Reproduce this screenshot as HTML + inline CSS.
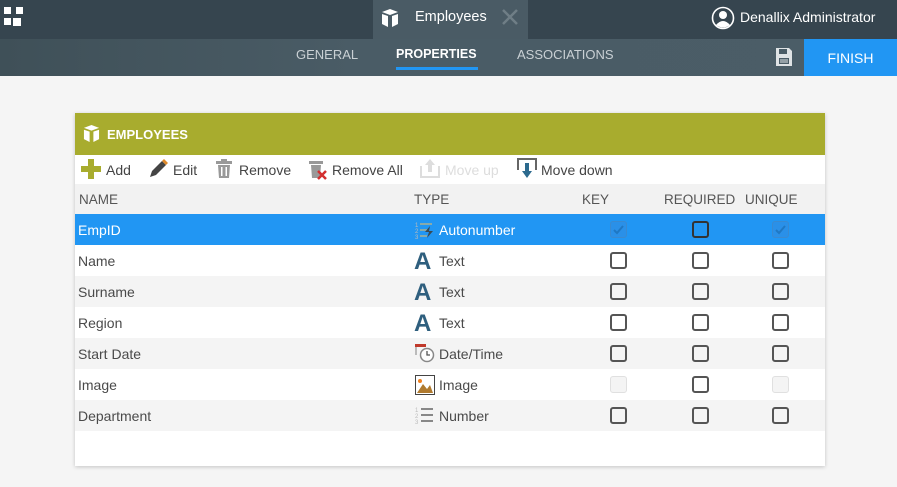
<!DOCTYPE html>
<html><head><meta charset="utf-8"><style>
*{margin:0;padding:0;box-sizing:border-box}
body{width:897px;height:487px;overflow:hidden;background:#f5f5f5;font-family:"Liberation Sans",sans-serif;font-size:14px;color:#4a4a4a;position:relative}
.a{position:absolute}
.top{left:0;top:0;width:897px;height:39px;background:#36454f}
.tab{left:373px;top:0;width:155px;height:39px;background:#4a5b65}
.bar{left:0;top:39px;width:897px;height:37px;background:linear-gradient(90deg,#3f5058,#4a5c66 40%,#4b5d67)}
.nav{top:47px;font-size:13px;color:#c9d0d4}
.fin{left:804px;top:39px;width:93px;height:37px;background:#2196f3;color:#fff;font-size:14px;text-align:center;line-height:38px}
.panel{left:75px;top:113px;width:750px;height:353px;background:#fff;box-shadow:0 1px 4px rgba(0,0,0,.2)}
.hd{left:0;top:0;width:750px;height:42px;background:#a8ac2e;color:#fff;font-weight:bold;font-size:13px}
.tb{top:49px;font-size:14px;color:#444}
.row{left:0;width:750px;height:31px}
.row span{position:absolute;top:8px}
.cb{position:absolute;width:17px;height:17px;border:2px solid #555;border-radius:3px;top:7px}
.cd{border:1px solid #e0e0e0;background:#f4f4f4}
</style></head><body>
<div class="a top"></div>
<div class="a" style="left:4px;top:7px;width:7px;height:7px;background:#fff"></div>
<div class="a" style="left:16px;top:7px;width:7px;height:7px;background:#fff"></div>
<div class="a" style="left:4px;top:18px;width:7px;height:7px;background:#fff"></div>
<div class="a" style="left:13px;top:18px;width:8px;height:8px;background:#fff"></div>
<div class="a tab"></div>
<svg class="a" style="left:381px;top:9px" width="18" height="18" viewBox="0 0 18 18"><path d="M1 3 L9 0 L17 3 L9 6Z M1 5 L7 7 V18 L1 15Z M17 5 L11 7 V18 L17 15Z" fill="#fff"/></svg>
<div class="a" style="left:415px;top:9px;color:#fff;font-size:14.5px">Employees</div>
<svg class="a" style="left:501px;top:8px" width="18" height="18"><path d="M2 2L16 16M16 2L2 16" stroke="#6f7e86" stroke-width="2.5"/></svg>
<svg class="a" style="left:711px;top:6px" width="24" height="24" viewBox="0 0 24 24"><circle cx="12" cy="12" r="10.5" fill="none" stroke="#fff" stroke-width="1.6"/><circle cx="12" cy="9" r="4" fill="#fff"/><path d="M5 19 Q12 11 19 19 Q12 24 5 19Z" fill="#fff"/></svg>
<div class="a" style="left:740px;top:9px;color:#fff;font-size:14px">Denallix Administrator</div>
<div class="a bar"></div>
<div class="a nav" style="left:296px">GENERAL</div>
<div class="a nav" style="left:396px;color:#fff;font-weight:bold;font-size:12.5px">PROPERTIES</div>
<div class="a" style="left:396px;top:67px;width:82px;height:3px;background:#2196f3"></div>
<div class="a nav" style="left:517px">ASSOCIATIONS</div>
<svg class="a" style="left:775px;top:47px" width="18" height="20" viewBox="0 0 18 20"><path d="M1 1H14L17 4V19H1Z" fill="#dfe3e5"/><rect x="4" y="2" width="8" height="5" fill="#4a5c66"/><rect x="4" y="11" width="10" height="6" fill="#4a5c66"/><rect x="5" y="12.5" width="8" height="1" fill="#dfe3e5"/><rect x="5" y="14.5" width="8" height="1" fill="#dfe3e5"/></svg>
<div class="a fin">FINISH</div>

<div class="a panel">
<div class="a hd"><svg class="a" style="left:8px;top:12px" width="17" height="17" viewBox="0 0 18 18"><path d="M1 3 L9 0 L17 3 L9 6Z M1 5 L7 7 V18 L1 15Z M17 5 L11 7 V18 L17 15Z" fill="#fff"/></svg><span class="a" style="left:32px;top:14px">EMPLOYEES</span></div>
<svg class="a" style="left:6px;top:46px" width="20" height="20"><path d="M7 0h6v7h7v6h-7v7H7v-7H0V7h7z" fill="#a8ac2e"/></svg>
<div class="a tb" style="left:31px">Add</div>
<svg class="a" style="left:73px;top:46px" width="20" height="20"><path d="M2 18 L4 12 L14 2 L18 6 L8 16Z" fill="#444"/><path d="M14 2 L16 0 L20 4 L18 6Z" fill="#e08a2a"/></svg>
<div class="a tb" style="left:98px">Edit</div>
<svg class="a" style="left:140px;top:46px" width="18" height="20"><rect x="1" y="2" width="16" height="3" fill="#999"/><rect x="6" y="0" width="6" height="3" fill="#999"/><path d="M3 6H15L14 19H4Z" fill="#999"/><rect x="6" y="8" width="1.5" height="9" fill="#fff"/><rect x="10.5" y="8" width="1.5" height="9" fill="#fff"/></svg>
<div class="a tb" style="left:164px">Remove</div>
<svg class="a" style="left:233px;top:46px" width="20" height="22"><rect x="1" y="2" width="14" height="3" fill="#999"/><path d="M3 6H13L12 19H4Z" fill="#999"/><path d="M10 12L18 20M18 12L10 20" stroke="#d32f2f" stroke-width="2.5"/></svg>
<div class="a tb" style="left:257px">Remove All</div>
<svg class="a" style="left:345px;top:45px" width="20" height="20"><path d="M1 8V19H19V8" fill="none" stroke="#ddd" stroke-width="2"/><path d="M10 1L15 7H12V14H8V7H5Z" fill="#ddd"/></svg>
<div class="a tb" style="left:370px;color:#ddd">Move up</div>
<svg class="a" style="left:442px;top:45px" width="20" height="22"><path d="M1 12V1H19V12" fill="none" stroke="#666" stroke-width="2"/><path d="M8 5H12V13H15L10 20L5 13H8Z" fill="#2c6a8e"/></svg>
<div class="a tb" style="left:466px">Move down</div>

<div class="a row" style="top:71px;height:30px;background:#f2f2f2;color:#555;font-size:13.5px"><span style="left:4px">NAME</span><span style="left:339px">TYPE</span><span style="left:507px">KEY</span><span style="left:589px">REQUIRED</span><span style="left:670px">UNIQUE</span></div>

<div class="a row" style="top:101px;background:#2196f3;color:#fff"><span style="left:3px">EmpID</span>
<svg class="a" style="left:340px;top:7px" width="20" height="18"><text x="0" y="6" font-size="6" fill="#bbb">1</text><text x="0" y="12" font-size="6" fill="#bbb">2</text><text x="0" y="18" font-size="6" fill="#bbb">3</text><rect x="5" y="2" width="12" height="2" fill="#8aa"/><rect x="5" y="8" width="7" height="2" fill="#8aa"/><rect x="5" y="14" width="7" height="2" fill="#8aa"/><path d="M15 5L10 11H14L12 17L18 10H14Z" fill="#3a4a55"/></svg>
<span style="left:364px">Autonumber</span>
<div class="cb" style="left:535px;border:1px solid #3a8ad0;background:#2a90e8"><svg width="15" height="15" style="position:absolute;left:0;top:0"><path d="M3 8L6 11L12 4" stroke="#1f78c4" stroke-width="2" fill="none"/></svg></div><div class="cb" style="left:617px;border-color:#333"></div><div class="cb" style="left:697px;border:1px solid #3a8ad0;background:#2a90e8"><svg width="15" height="15" style="position:absolute;left:0;top:0"><path d="M3 8L6 11L12 4" stroke="#1f78c4" stroke-width="2" fill="none"/></svg></div></div>

<div class="a row" style="top:132px;background:#fff"><span style="left:3px">Name</span><span style="left:339px;top:3px;font-size:24px;font-weight:bold;color:#2f5f7e">A</span><span style="left:364px">Text</span><div class="cb" style="left:535px"></div><div class="cb" style="left:617px"></div><div class="cb" style="left:697px"></div></div>
<div class="a row" style="top:163px;background:#f4f4f4"><span style="left:3px">Surname</span><span style="left:339px;top:3px;font-size:24px;font-weight:bold;color:#2f5f7e">A</span><span style="left:364px">Text</span><div class="cb" style="left:535px"></div><div class="cb" style="left:617px"></div><div class="cb" style="left:697px"></div></div>
<div class="a row" style="top:194px;background:#fff"><span style="left:3px">Region</span><span style="left:339px;top:3px;font-size:24px;font-weight:bold;color:#2f5f7e">A</span><span style="left:364px">Text</span><div class="cb" style="left:535px"></div><div class="cb" style="left:617px"></div><div class="cb" style="left:697px"></div></div>
<div class="a row" style="top:225px;background:#f4f4f4"><span style="left:3px">Start Date</span>
<svg class="a" style="left:340px;top:5px" width="20" height="20"><rect x="0" y="1" width="11" height="3" fill="#c0392b"/><rect x="0" y="4" width="2" height="8" fill="#bbb"/><circle cx="12" cy="12" r="6.5" fill="#fff" stroke="#888" stroke-width="1.5"/><path d="M12 8V12H15" stroke="#555" stroke-width="1.3" fill="none"/></svg>
<span style="left:364px">Date/Time</span><div class="cb" style="left:535px"></div><div class="cb" style="left:617px"></div><div class="cb" style="left:697px"></div></div>
<div class="a row" style="top:256px;background:#fff"><span style="left:3px">Image</span>
<svg class="a" style="left:340px;top:6px" width="20" height="20"><rect x="0.5" y="0.5" width="19" height="19" fill="#fff" stroke="#444"/><circle cx="5" cy="6" r="2" fill="#f0801f"/><path d="M2 18L8 9L12 14L15 10L18 18Z" fill="#b07a2e"/></svg>
<span style="left:364px">Image</span><div class="cb cd" style="left:535px"></div><div class="cb" style="left:617px"></div><div class="cb cd" style="left:697px"></div></div>
<div class="a row" style="top:287px;background:#f4f4f4"><span style="left:3px">Department</span>
<svg class="a" style="left:340px;top:6px" width="20" height="20"><text x="0" y="6" font-size="6" fill="#bbb">1</text><text x="0" y="12" font-size="6" fill="#bbb">2</text><text x="0" y="18" font-size="6" fill="#bbb">3</text><rect x="6" y="2" width="12" height="2" fill="#888"/><rect x="6" y="8" width="12" height="2" fill="#888"/><rect x="6" y="14" width="12" height="2" fill="#888"/></svg>
<span style="left:364px">Number</span><div class="cb" style="left:535px"></div><div class="cb" style="left:617px"></div><div class="cb" style="left:697px"></div></div>
</div>
</body></html>
